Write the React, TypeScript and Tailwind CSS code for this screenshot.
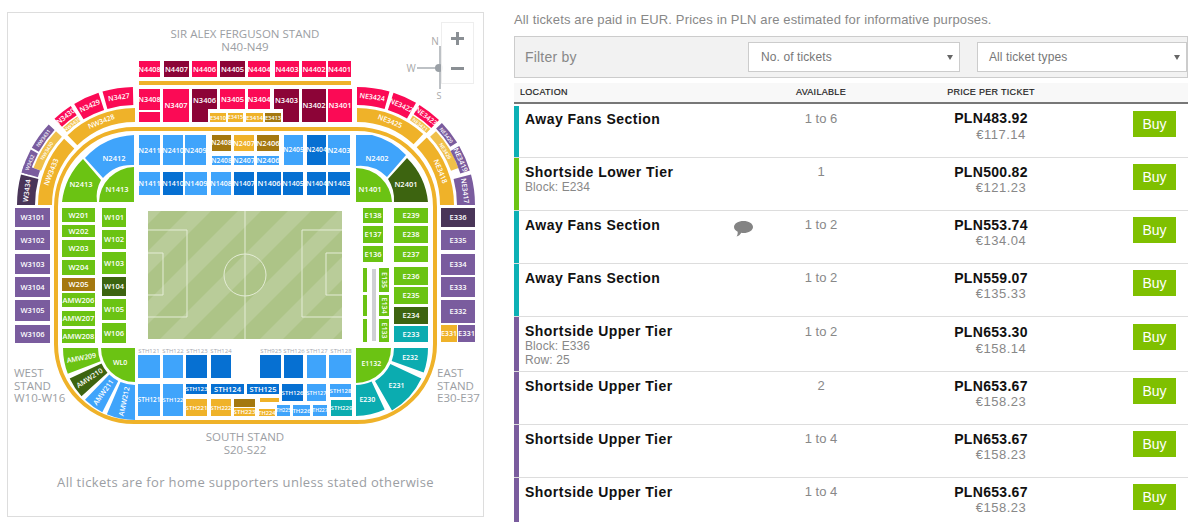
import React from "react";

const R = "#fb0a55", RD = "#8c0437", G = "#efb229", GD = "#a4780f", B = "#3fa4fb", BD = "#0670d2", GR = "#6bc313", GRD = "#3d6410", P = "#7a5c9e", PD = "#493558", T = "#0bacb0";

type Bk = [string, number, number, number, number, string];
const blocks: Bk[] = [
  ["N4408",139,61,160,77,R],["N4407",164,61,189,77,RD],["N4406",192,61,217,77,R],["N4405",220,61,245,77,RD],["N4404",248,61,270,77,R],["N4403",275,61,299,77,R],["N4402",302,61,326,77,R],["N4401",328,61,351,77,R],
  ["",139,81,351,85,G],
  ["N3408",139,89,160,110,R],["",139,112,160,122,R],["N3407",163,89,189,122,R],["N3405",220,89,245,109,R],["N3404",248,89,270,109,R],["N3402",302,89,326,122,RD],["N3401",328,89,352,122,R],
  ["E3410",210,113,226,122,G],["E3415",228,113,243,122,G],["E3414",246,113,263,122,G],["E3413",265,113,281,122,GD],
  ["N2411",139,135,160,165,B],["N2410",163,135,183,165,B],["N2409",185,135,206,165,B],["N2408",212,135,231,151,GD],["N2407",234,135,254,151,G],["N2406",257,135,279,151,GD],["N2405",284,135,303,165,B],["N2404",307,135,326,165,BD],["N2403",328,135,350,165,B],
  ["N2408",212,156,231,165,B],["N2407",234,156,254,165,B],["N2406",257,156,279,165,B],
  ["N1411",139,172,160,195,B],["N1410",163,172,183,195,BD],["N1409",185,172,207,195,B],["N1408",211,172,231,195,B],["N1407",234,172,254,195,BD],["N1406",257,172,281,195,BD],["N1405",283,172,303,195,BD],["N1404",307,172,326,195,BD],["N1403",328,172,350,195,BD],
  ["W3101",15,208,50,227,P],["W3102",15,230,50,250,P],["W3103",15,254,50,274,P],["W3104",15,277,50,297,P],["W3105",15,300,50,321,P],["W3106",15,325,50,343,P],
  ["W201",62,208,95,222,GR],["W202",62,225,95,237,GR],["W203",62,240,95,257,GR],["W204",62,260,95,275,GR],["W205",62,278,95,291,GD],["AMW206",62,293,95,307,GR],["AMW207",62,311,95,326,GR],["AMW208",62,329,95,343,GR],
  ["W101",102,208,126,227,GR],["W102",102,230,126,249,GR],["W103",102,252,126,274,GR],["W104",102,277,126,296,GRD],["W105",102,299,126,320,GR],["W106",102,323,126,343,GR],
  ["",138,355,160,378,B],["",163,355,183,378,B],["",186,355,207,378,BD],["",211,355,231,378,BD],["",260,355,281,378,BD],["",284,355,303,378,BD],["",307,355,326,378,B],["",329,355,351,378,B],
  ["STH121",138,384,160,416,B],["STH122",163,384,183,416,B],["STH123",186,384,207,394,BD],["STH124",211,384,244,394,BD],["STH125",247,384,279,394,BD],["STH126",282,384,303,401,BD],["STH127",307,384,326,401,B],["STH128",330,384,351,397,B],
  ["STH221",186,399,207,416,G],["STH222",211,399,231,416,G],["",234,399,255,407,GD],["STH223",234,408,255,416,G],["",260,398,279,402,G],["TH224",259,409,275,416,G],["TH225",277,405,290,416,B],["TH226",293,405,310,416,B],["TH227",313,405,327,416,B],["STH229",331,400,352,416,T],
  ["E138",363,208,383,223,GR],["E137",363,226,383,243,GR],["E136",363,246,383,262,GR],
  ["E239",394,208,428,223,GR],["E238",394,226,428,243,GR],["E237",394,246,428,262,GR],["E236",394,267,428,285,GR],["E235",394,287,428,304,GR],["E234",394,307,428,324,GRD],["E233",394,326,428,342,T],
  ["",363,268,367,292,GR],["",363,295,367,316,GR],["",363,319,367,342,GR],["",372,269,376,341,"#cfcfd4"],
  ["E336",441,208,475,227,PD],["E335",441,230,475,250,P],["E334",441,254,475,275,P],["E333",441,277,475,297,P],["E332",441,300,475,323,P],["E331",441,325,457,342,G],["E331",458,325,475,342,P],
];

type Sec = [string, number, number, number, number, string];
const rad = (d: number) => (d * Math.PI) / 180;
function sector(cx: number, cy: number, sx: number, sy: number, r0: number, r1: number, a0: number, a1: number) {
  const p = (r: number, a: number) => `${(cx + sx * r * Math.cos(rad(a))).toFixed(1)} ${(cy + sy * r * Math.sin(rad(a))).toFixed(1)}`;
  const sweep = sx * sy > 0 ? 1 : 0;
  const inner = r0 > 0 ? `L${p(r0, a1)} A${r0} ${r0} 0 0 ${1 - sweep} ${p(r0, a0)}` : `L${cx} ${cy}`;
  return `M${p(r1, a0)} A${r1} ${r1} 0 0 ${sweep} ${p(r1, a1)} ${inner} Z`;
}

const nw: Sec[] = [
  ["N3427",100,118,74,89,R],["N3429",100,118,59,72,R],["N3430",107,118,47,57,R],["NW3435",100,105.5,47,57,"#f3c24d"],
  ["NW3431",110,118,29,43,P],["NW3430",100,108,20,43,"#f0c04a"],["W3432",101,118,16,20,P],["W3432",110,118,16,28,P],["W3434",100,118,0,15,PD],
  ["NW3428",83,97,46,90,G],["NW3433",83,97,0,43,G],
];
const ne: Sec[] = [
  ["NE3424",100,118,74,90,R],["NE3422",100,118,60,72,R],["NE3423",107,118,46,58,R],["NE3421",100,105.5,46,58,"#f3c24d"],
  ["NE3420",110,118,32,44,P],["NE3426",100,108,20,43,"#f0c04a"],["NE3419",108,118,17,30,P],["NE3417",100,118,0,15,P],
  ["NE3425",83,97,47,90,G],["NE3418",83,97,0,44,G],
];
const sw: Sec[] = [
  ["AMW209",37,72,0,21,GR],["AMW210",37,72,25,42,GRD],["AMW211",37,72,46,63,B],["AMW212",37,72,67,90,B],["WL0",0,34,0,90,GR],
];
const se: Sec[] = [
  ["E232",38,72,0,20,T],["E231",38,72,25,60,T],["E230",37,68,65,90,T],["E1132",0,35,0,90,GR],
];

const LABEL = { fill: "#fff", fontWeight: 600, textAnchor: "middle" as const };

function Secs({ list, cx, cy, sx, sy, rot }: { list: Sec[]; cx: number; cy: number; sx: number; sy: number; rot: (a: number) => number }) {
  return (
    <>
      {list.map(([n, r0, r1, a0, a1, c], i) => {
        const m = (a0 + a1) / 2;
        const r = r0 === 0 ? r1 * 0.62 : (r0 + r1) / 2;
        const x = cx + sx * r * Math.cos(rad(m));
        const y = cy + sy * r * Math.sin(rad(m));
        const thinRing = r1 - r0 < 9;
        return (
          <g key={i}>
            <path d={sector(cx, cy, sx, sy, r0, r1, a0, a1)} fill={c} />
            {a1 - a0 >= 6 && (
              <text x={x} y={y + 2.4} {...LABEL} fontSize={thinRing ? 5 : 7} transform={`rotate(${r0 === 0 ? 0 : rot(m)} ${x} ${y})`}>
                {n}
              </text>
            )}
          </g>
        );
      })}
    </>
  );
}

const Stand = ({ x, y, lines, anchor = "start" }: { x: number; y: number; lines: string[]; anchor?: "start" | "middle" }) => (
  <text fill="#9b9ea3" fontSize="11.5" textAnchor={anchor}>
    {lines.map((l, i) => (
      <tspan key={i} x={x} y={y + i * 12.5}>{l}</tspan>
    ))}
  </text>
);

const stripes = Array.from({ length: 9 }, (_, i) => 10 + i * 50);

function StadiumMap() {
  return (
    <svg viewBox="8 13 475 503" className="block h-full w-full" style={{ fontFamily: "'Open Sans', sans-serif" }}>
      <clipPath id="pitch"><rect x="148" y="211" width="194" height="128" /></clipPath>
      <Stand x={245} y={38} lines={["SIR ALEX FERGUSON STAND", "N40-N49"]} anchor="middle" />
      <Stand x={245} y={441} lines={["SOUTH STAND", "S20-S22"]} anchor="middle" />
      <Stand x={14} y={377} lines={["WEST", "STAND", "W10-W16"]} />
      <Stand x={437} y={377} lines={["EAST", "STAND", "E30-E37"]} />
      <text x="245.5" y="487" fill="#9b9ea3" fontSize="13" letterSpacing="0.34" textAnchor="middle">All tickets are for home supporters unless stated otherwise</text>

      <g stroke="#9aa0a6">
        <text x="435" y="45" fill="#a8a8a8" stroke="none" fontSize="10" textAnchor="middle">N</text>
        <text x="411" y="72" fill="#a8a8a8" stroke="none" fontSize="10" textAnchor="middle">W</text>
        <text x="439" y="99" fill="#a8a8a8" stroke="none" fontSize="9" textAnchor="middle">S</text>
        <line x1="417" y1="68" x2="440" y2="68" strokeWidth="1.3" />
        <line x1="440" y1="46" x2="440" y2="89" strokeWidth="1.3" />
        <circle cx="439" cy="68" r="4" fill="#9aa0a6" stroke="none" />
      </g>

      <rect x="56" y="129" width="379" height="293" rx="78" fill="none" stroke={G} strokeWidth="4" />

      <rect x="148" y="211" width="194" height="128" fill="#adc487" />
      <g clipPath="url(#pitch)">
        {stripes.map((x) => (
          <polygon key={x} points={`${x},339 ${x + 128},211 ${x + 151},211 ${x + 23},339`} fill="#b9cc99" />
        ))}
      </g>
      <g fill="none" stroke="#e4ecd6" strokeWidth="1">
        <line x1="245" y1="211" x2="245" y2="339" />
        <circle cx="245" cy="275" r="21" />
        <path d="M148 230 H187 V317 H148" />
        <path d="M148 253 H163 V295 H148" />
        <path d="M342 230 H302 V317 H342" />
        <path d="M342 253 H326 V295 H342" />
      </g>

      <path d="M192 89H217V109H208V122H192Z" fill={RD} />
      <path d="M274 89H299V122H283V109H274Z" fill={RD} />

      {blocks.map(([n, x1, y1, x2, y2, c], i) => (
        <rect key={i} x={x1} y={y1} width={x2 - x1} height={y2 - y1} fill={c} />
      ))}
      <text x="204.500" y="103" {...LABEL} fontSize="7.5">N3406</text>
      <text x="286.500" y="103" {...LABEL} fontSize="7.5">N3403</text>
      {blocks.map(([n, x1, y1, x2, y2], i) => {
        if (!n) return null;
        const w = x2 - x1;
        const fs = Math.min(7.5, (w + 2) / (n.length * 0.63));
        return (
          <text key={i} x={(x1 + x2) / 2} y={(y1 + y2) / 2 + fs * 0.36} {...LABEL} fontSize={fs}>{n}</text>
        );
      })}

      {([["E135",268,292],["E134",295,316],["E133",319,342]] as [string, number, number][]).map(([n, a, b]) => (
        <g key={n}>
          <rect x="379" y={a} width="10" height={b - a} fill={GR} />
          <text x="384" y={(a + b) / 2} {...LABEL} fontSize="7" transform={`rotate(90 384 ${(a + b) / 2})`} dy="2.5">{n}</text>
        </g>
      ))}

      <path d="M85 158 A70 70 0 0 1 134 135 V165 A38 38 0 0 0 103 178 Z" fill={B} />
      <path d="M62 202 A72 72 0 0 1 83 159 L101 180 A35 35 0 0 0 97 202 Z" fill={GR} />
      <path d="M99 202 A36 36 0 0 1 134 167 V202 Z" fill={GR} />
      <text x="114" y="161" {...LABEL} fontSize="7.5">N2412</text>
      <text x="81" y="187" {...LABEL} fontSize="7.5">N2413</text>
      <text x="117" y="192" {...LABEL} fontSize="7.5">N1413</text>

      <path d="M356 135 H372 A70 70 0 0 1 406 155 L387 177 A38 38 0 0 0 356 166 Z" fill={B} />
      <path d="M356 168 A36 36 0 0 1 392 202 H356 Z" fill={GR} />
      <path d="M407 158 A72 72 0 0 1 428 202 H394 A38 38 0 0 0 388 179 Z" fill={GRD} />
      <text x="377" y="161" {...LABEL} fontSize="7.5">N2402</text>
      <text x="406" y="187" {...LABEL} fontSize="7.5">N2401</text>
      <text x="370" y="192" {...LABEL} fontSize="7.5">N1401</text>

      <Secs list={nw} cx={135} cy={205} sx={-1} sy={-1} rot={(a) => a - 90} />
      <Secs list={ne} cx={357} cy={205} sx={1} sy={-1} rot={(a) => 90 - a} />
      <Secs list={sw} cx={135} cy={348} sx={-1} sy={1} rot={(a) => -a} />
      <Secs list={se} cx={356} cy={348} sx={1} sy={1} rot={() => 0} />

      {([["STH121",149],["STH122",173],["STH123",197],["STH124",221],["STH925",271],["STH126",294],["STH127",317],["STH128",341]] as [string, number][]).map(([n, x]) => (
        <text key={n} x={x} y="353" fill="#a7aab0" fontSize="6" textAnchor="middle">{n}</text>
      ))}
    </svg>
  );
}

const TEAL = "bg-[#0cb0b5]";
const GREEN = "bg-[#6cc414]";
const PURPLE = "bg-[#7a5c9e]";

type Row = { h: string; bar: string; name: string; lines: string[]; av: string; pln: string; eur: string; note?: boolean; nameTop: string; avTop: string; buyTop: string; priceTop: string; eurTop: string };
const base = { nameTop: "pt-[7px]", avTop: "pt-[5px]", buyTop: "pt-[6px]", priceTop: "pt-[7px]", eurTop: "" };
const rows: Row[] = [
  { ...base, h: "h-[54px]", bar: `${TEAL} mt-[2px]`, nameTop: "pt-[8px]", avTop: "pt-[6px]", buyTop: "pt-[7px]", eurTop: "mt-[1px]", name: "Away Fans Section", lines: [], av: "1 to 6", pln: "PLN483.92", eur: "€117.14" },
  { ...base, h: "h-[53px]", bar: GREEN, name: "Shortside Lower Tier", lines: ["Block: E234"], av: "1", pln: "PLN500.82", eur: "€121.23" },
  { ...base, h: "h-[53px]", bar: TEAL, name: "Away Fans Section", lines: [], av: "1 to 2", pln: "PLN553.74", eur: "€134.04", note: true },
  { ...base, h: "h-[53px]", bar: TEAL, name: "Away Fans Section", lines: [], av: "1 to 2", pln: "PLN559.07", eur: "€135.33" },
  { ...base, h: "h-[55px]", bar: PURPLE, avTop: "pt-[6px]", buyTop: "pt-[7px]", priceTop: "pt-[8px]", eurTop: "mt-[1px]", name: "Shortside Upper Tier", lines: ["Block: E336", "Row: 25"], av: "1 to 2", pln: "PLN653.30", eur: "€158.14" },
  { ...base, h: "h-[53px]", bar: PURPLE, name: "Shortside Upper Tier", lines: [], av: "2", pln: "PLN653.67", eur: "€158.23" },
  { ...base, h: "h-[53px]", bar: PURPLE, name: "Shortside Upper Tier", lines: [], av: "1 to 4", pln: "PLN653.67", eur: "€158.23" },
  { ...base, h: "h-[53px]", bar: PURPLE, name: "Shortside Upper Tier", lines: [], av: "1 to 4", pln: "PLN653.67", eur: "€158.23" },
];

const Dropdown = ({ label, w }: { label: string; w: string }) => (
  <div className={`flex h-[30px] items-center justify-between border border-[#ccc] bg-white pr-[6px] text-[12px] tracking-[0.1px] text-[#777] ${w}`}>
    <span>{label}</span>
    <span className="h-0 w-0 border-x-[3px] border-t-[5px] border-x-transparent border-t-[#666]" />
  </div>
);

export default function App() {
  return (
    <div className="flex h-[522px] w-[1188px] overflow-hidden bg-white font-['Liberation_Sans',sans-serif]">
      <div className="relative ml-[7px] mt-[12px] h-[505px] w-[477px] shrink-0 border border-[#ddd]">
        <StadiumMap />
        <div className="absolute left-[433px] top-[9px] flex h-[62px] w-[33px] flex-col items-center gap-[17px] border border-[#eee] bg-white/90 pt-[9px] text-[#8a8f94]">
          <svg width="13" height="13" viewBox="0 0 13 13"><path d="M5 0h3v5h5v3H8v5H5V8H0V5h5z" fill="currentColor" /></svg>
          <svg width="13" height="13" viewBox="0 0 13 13"><path d="M0 5h13v3H0z" fill="currentColor" /></svg>
        </div>
      </div>

      <div className="ml-[30px] flex w-[674px] shrink-0 flex-col">
        <p className="mt-[12px] h-[24px] shrink-0 text-[13px] leading-[15px] tracking-[0.15px] text-[#888]">All tickets are paid in EUR. Prices in PLN are estimated for informative purposes.</p>
        <div className="flex h-[42px] shrink-0 items-center border border-[#ccc] bg-[#f2f2f2] pl-[10px]">
          <span className="w-[223px] text-[14px] tracking-[0.2px] text-[#888]">Filter by</span>
          <Dropdown label="No. of tickets" w="w-[212px] pl-[12px]" />
          <Dropdown label="All ticket types" w="ml-[17px] w-[210px] pl-[11px]" />
        </div>
        <div className="mt-[5px] grid h-[21px] shrink-0 grid-cols-[257px_100px_240px] items-center border-b-2 border-[#777] bg-[#f8f8f8] text-[9px] tracking-[0.3px] text-[#222] [-webkit-text-stroke:0.2px_#222]">
          <span className="pl-[6px]">LOCATION</span>
          <span className="text-center">AVAILABLE</span>
          <span className="text-center">PRICE PER TICKET</span>
        </div>
        {rows.map((r, i) => (
          <div key={i} className={`grid shrink-0 grid-cols-[5px_209px_43px_100px_240px_1fr] border-b border-[#ddd] ${r.h}`}>
            <div className={r.bar} />
            <div className={`pl-[6px] ${r.nameTop}`}>
              <div className="text-[14px] font-bold leading-[15px] tracking-[0.47px] text-[#111]">{r.name}</div>
              {r.lines.map((l) => (
                <div key={l} className="text-[12px] leading-[14px] tracking-[0.1px] text-[#888]">{l}</div>
              ))}
            </div>
            <div className="pl-[6px] pt-[10px]">
              {r.note && (
                <svg width="19" height="16" viewBox="0 0 19 16">
                  <path d="M9.500 0C14.700 0 19 2.600 19 6s-4.300 6-9.500 6c-.8 0-1.500-.1-2.200-.2C6.200 13.600 4.600 15.200 2.500 15.500c.8-1 1.300-2.200 1.200-4.700C1.500 9.700 0 8 0 6 0 2.600 4.300 0 9.500 0z" fill="#848484" />
                </svg>
              )}
            </div>
            <div className={`text-center text-[13px] leading-[18px] text-[#888] ${r.avTop}`}>{r.av}</div>
            <div className={`text-center ${r.priceTop}`}>
              <div className="text-[14px] font-bold leading-[15px] tracking-[0.3px] text-[#111]">{r.pln}</div>
              <div className={`pl-[20px] text-[13px] leading-[15px] tracking-[0.5px] text-[#888] ${r.eurTop}`}>{r.eur}</div>
            </div>
            <div className={`pl-[22px] ${r.buyTop}`}>
              <div className="flex h-[26px] w-[43px] items-center justify-center bg-[#7fc000] text-[14px] text-white">Buy</div>
            </div>
          </div>
        ))}
      </div>
    </div>
  );
}
